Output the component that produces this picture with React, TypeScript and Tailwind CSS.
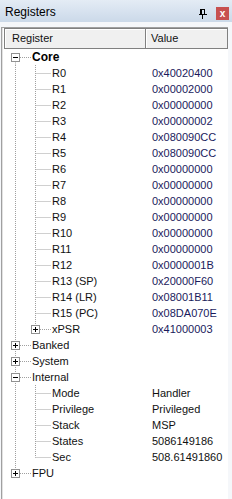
import React from 'react';

type Link = 'tee' | 'elbow' | 'pipe' | 'blank' | 'first';

interface Row {
  label: string;
  value?: string;
  level: 0 | 1;
  links: Link[];
  box?: '+' | '-';
  bold?: boolean;
  hex?: boolean;
}

const core = [
  ['R0', '0x40020400'],
  ['R1', '0x00002000'],
  ['R2', '0x00000000'],
  ['R3', '0x00000002'],
  ['R4', '0x080090CC'],
  ['R5', '0x080090CC'],
  ['R6', '0x00000000'],
  ['R7', '0x00000000'],
  ['R8', '0x00000000'],
  ['R9', '0x00000000'],
  ['R10', '0x00000000'],
  ['R11', '0x00000000'],
  ['R12', '0x0000001B'],
  ['R13 (SP)', '0x20000F60'],
  ['R14 (LR)', '0x08001B11'],
  ['R15 (PC)', '0x08DA070E'],
];

const internal = [
  ['Mode', 'Handler'],
  ['Privilege', 'Privileged'],
  ['Stack', 'MSP'],
  ['States', '5086149186'],
];

const rows: Row[] = [
  { label: 'Core', level: 0, links: ['first'], box: '-', bold: true },
  ...core.map(([label, value]) => ({ label, value, level: 1 as const, links: ['pipe', 'tee'] as Link[], hex: true })),
  { label: 'xPSR', value: '0x41000003', level: 1, links: ['pipe', 'elbow'], box: '+', hex: true },
  { label: 'Banked', level: 0, links: ['tee'], box: '+' },
  { label: 'System', level: 0, links: ['tee'], box: '+' },
  { label: 'Internal', level: 0, links: ['tee'], box: '-' },
  ...internal.map(([label, value]) => ({ label, value, level: 1 as const, links: ['pipe', 'tee'] as Link[] })),
  { label: 'Sec', value: '508.61491860', level: 1, links: ['pipe', 'elbow'] },
  { label: 'FPU', level: 0, links: ['elbow'], box: '+' },
];

// one 20px indent column of the tree, drawn as dotted lines
const TreeCell = ({ link, box, last }: { link: Link; box?: '+' | '-'; last: boolean }) => {
  const dot = { stroke: '#a0a0a0', strokeWidth: 1, strokeDasharray: '1 1' };
  const x = 4.5;
  const mid = 8.5;
  return (
    <svg width="20" height="16" className="shrink-0 block">
      {link === 'pipe' && <line x1={x} y1={0} x2={x} y2={16} {...dot} />}
      {link === 'tee' && <line x1={x} y1={0} x2={x} y2={16} {...dot} />}
      {link === 'first' && <line x1={x} y1={mid} x2={x} y2={16} {...dot} />}
      {link === 'elbow' && <line x1={x} y1={0} x2={x} y2={mid} {...dot} />}
      {last && link !== 'pipe' && link !== 'blank' && (
        <line x1={box ? 9 : x} y1={mid} x2={20} y2={mid} {...dot} />
      )}
      {last && box && (
        <g>
          <rect x={0.5} y={4.5} width={8} height={8} fill="#fff" stroke="#919191" />
          <line x1={2} y1={mid} x2={7} y2={mid} stroke="#000" />
          {box === '+' && <line x1={x} y1={6} x2={x} y2={11} stroke="#000" />}
        </g>
      )}
    </svg>
  );
};

const PinIcon = () => (
  <svg width="8" height="10" viewBox="0 0 8 10" className="block">
    <rect x="1" y="0" width="2" height="6" fill="#000" />
    <rect x="3" y="0" width="3" height="1" fill="#000" />
    <rect x="5" y="0" width="1" height="6" fill="#000" />
    <rect x="0" y="5" width="8" height="1" fill="#000" />
    <rect x="3" y="6" width="1" height="4" fill="#000" />
  </svg>
);

export default function App() {
  return (
    <div
      className="w-[232px] h-[499px] flex flex-col bg-[#eef3f9] overflow-hidden text-[11px] text-[#111]"
      style={{ fontFamily: '"Liberation Sans", Arial, sans-serif' }}
    >
      <div className="h-[22px] shrink-0 flex items-end justify-between pl-[5px] pr-[3px] pb-[3px] bg-gradient-to-b from-[#e4ecf5] to-[#cbd9e9]">
        <span className="text-[12px] leading-[14px] text-[#000]">Registers</span>
        <div className="flex items-center gap-[9px] mb-[-1px]">
          <PinIcon />
          <div className="w-[13px] h-[13px] bg-[#c75050] flex items-center justify-center text-white text-[10px] font-bold leading-none">
            x
          </div>
        </div>
      </div>

      <div className="flex-1 min-h-0 pt-[5px] pl-[1px] pr-[4px] bg-[#f5f7fa]">
        <div className="h-full border-l border-t border-[#a0a0a0] bg-white">
          <div className="h-full border-l border-[#e2e2e2] pl-[1px]">
            <div className="flex h-[21px] bg-[#f0f0f0]">
              <div className="w-[142px] border border-[#808080] shadow-[inset_1px_1px_0_#fff] pl-[7px] leading-[19px]">
                Register
              </div>
              <div className="flex-1 border border-l-0 border-[#808080] shadow-[inset_1px_1px_0_#fff] pl-[5px] leading-[19px]">
                Value
              </div>
            </div>
            {rows.map((row) => (
              <div key={row.label} className="flex h-[16px] leading-[16px]">
                <div className="w-[142px] flex pl-[7px] shrink-0">
                  {row.links.map((link, i) => (
                    <TreeCell key={i} link={link} box={row.box} last={i === row.links.length - 1} />
                  ))}
                  <span className={`ml-[1px] whitespace-nowrap ${row.bold ? 'font-bold text-[12px] text-black' : ''}`}>
                    {row.label}
                  </span>
                </div>
                <div className={`pl-[6px] whitespace-nowrap ${row.hex ? 'text-[#1a1a5c]' : ''}`}>{row.value}</div>
              </div>
            ))}
          </div>
        </div>
      </div>
    </div>
  );
}
